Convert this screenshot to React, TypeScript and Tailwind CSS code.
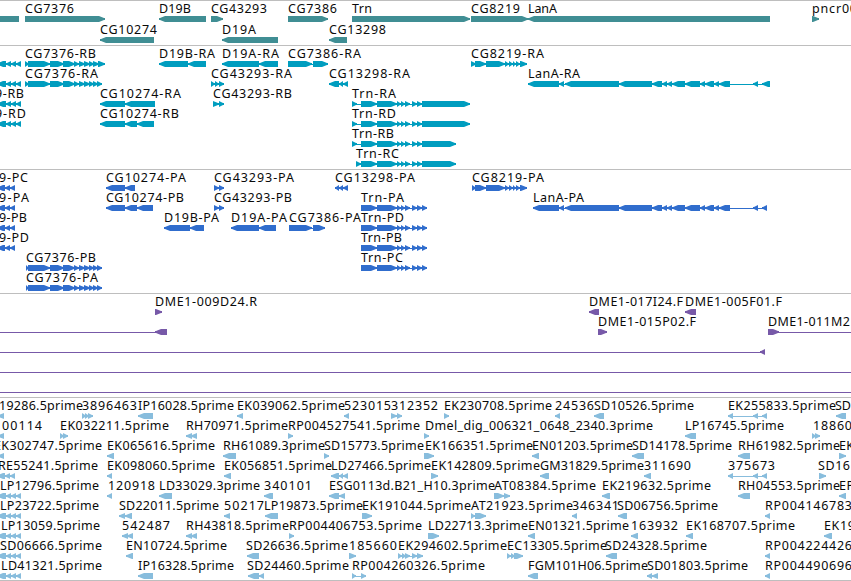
type Block = [number, number];
type Label = [text: string, start: number, end: number];
type Feature = { dir: "L" | "R" | "-"; blocks: Block[] };
type Row = { labels?: Label[]; features: Feature[] };

const L = (...blocks: Block[]): Feature => ({ dir: "L", blocks });
const R = (...blocks: Block[]): Feature => ({ dir: "R", blocks });
const line = (start: number, end: number): Feature => ({ dir: "-", blocks: [[start, end]] });

// exon runs shared by several transcripts
const cg7376: Block[] = [[28, 50], [50, 64], [63, 75], [74, 79], [79, 85], [84, 90], [89, 94]];
const trn: Block[] = [[361, 377], [377, 397], [397, 401], [401, 405], [405, 410], [412, 417]];
const cg8219: Block[] = [[475, 486], [486, 505], [505, 509], [509, 513], [513, 516], [516, 520], [520, 527]];
const lanA: Block[] = [
  [565, 619], [619, 652], [652, 662], [662, 667], [667, 672], [672, 685], [685, 700],
  [700, 705], [705, 714], [714, 719], [719, 730], [753, 758],
];
const edge21: Feature = L([-3, 6], [6, 11], [11, 16], [16, 21]);
const edge15: Feature = L([-3, 5], [5, 10], [10, 15]);

const genes: Row[] = [
  {
    labels: [
      ["CG7376", 25, 74], ["D19B", 159, 191], ["CG43293", 211, 267], ["CG7386", 288, 337],
      ["Trn", 352, 372], ["CG8219", 471, 520], ["LanA", 528, 557], ["pncr00", 812, 857],
    ],
    features: [
      L([-20, 19]), R([25, 105]), L([159, 206]), R([211, 223]), R([288, 328]),
      R([352, 470]), R([471, 528]), L([528, 770]), R([812, 819]),
    ],
  },
  {
    labels: [["CG10274", 100, 157], ["D19A", 222, 256], ["CG13298", 329, 386]],
    features: [L([100, 154]), L([222, 278]), L([329, 347])],
  },
];

const transcripts: Row[] = [
  {
    labels: [
      ["CG7376-RB", 25, 96], ["D19B-RA", 159, 215], ["D19A-RA", 222, 279],
      ["CG7386-RA", 288, 361], ["CG8219-RA", 471, 544],
    ],
    features: [
      edge21, R([25, 29], ...cg7376, [93, 99], [98, 105]), L([159, 188], [188, 206]),
      L([222, 259], [259, 278]), R([288, 312], [313, 328]), R([471, 476], ...cg8219),
    ],
  },
  {
    labels: [
      ["CG7376-RA", 25, 98], ["CG43293-RA", 211, 292], ["CG13298-RA", 329, 410], ["LanA-RA", 528, 580],
    ],
    features: [
      edge21, R([25, 29], ...cg7376, [93, 98], [97, 102]), R([211, 215], [215, 219], [219, 224]),
      L([329, 339], [339, 343], [343, 348]), L([528, 559], [559, 564], ...lanA, [762, 770]),
    ],
  },
  {
    labels: [["9-RB", -5, 24], ["CG10274-RA", 100, 181], ["CG43293-RB", 213, 292], ["Trn-RA", 352, 396]],
    features: [
      edge21, L([100, 125], [125, 155]), R([213, 219], [219, 224]),
      R([352, 357], ...trn, [417, 422], [422, 470]),
    ],
  },
  {
    labels: [["9-RD", -5, 26], ["CG10274-RB", 100, 179], ["Trn-RD", 352, 396]],
    features: [
      edge21, L([100, 125], [125, 137], [137, 154]), R([352, 357], ...trn, [417, 422], [422, 470]),
    ],
  },
  {
    labels: [["Trn-RB", 352, 394]],
    features: [R([352, 357], ...trn, [417, 422], [422, 456])],
  },
  {
    labels: [["Trn-RC", 356, 399]],
    features: [R([356, 361], ...trn, [417, 422], [422, 456])],
  },
];

const proteins: Row[] = [
  {
    labels: [
      ["9-PC", -1, 28], ["CG10274-PA", 106, 186], ["CG43293-PA", 214, 294],
      ["CG13298-PA", 335, 415], ["CG8219-PA", 472, 544],
    ],
    features: [
      edge15, L([106, 125], [125, 135]), R([214, 219], [219, 224]),
      L([335, 339], [339, 343], [343, 348]), R([472, 476], ...cg8219),
    ],
  },
  {
    labels: [
      ["9-PA", -1, 29], ["CG10274-PB", 106, 184], ["CG43293-PB", 214, 292],
      ["Trn-PA", 361, 404], ["LanA-PA", 533, 584],
    ],
    features: [
      edge15, L([106, 125], [125, 137], [137, 153]), R([214, 219], [219, 224]),
      R(...trn, [417, 422], [422, 427]), L([533, 559], [559, 564], ...lanA, [762, 767]),
    ],
  },
  {
    labels: [
      ["9-PB", -1, 27], ["D19B-PA", 164, 219], ["D19A-PA", 231, 287],
      ["CG7386-PA", 289, 361], ["Trn-PD", 361, 404],
    ],
    features: [
      edge15, L([164, 190], [190, 204]), L([231, 259], [259, 276]),
      R([289, 312], [313, 325]), R(...trn, [417, 422], [422, 427]),
    ],
  },
  {
    labels: [["9-PD", -1, 29], ["Trn-PB", 361, 402]],
    features: [edge15, R(...trn, [417, 422], [422, 427])],
  },
  {
    labels: [["CG7376-PB", 26, 96], ["Trn-PC", 361, 403]],
    features: [R([26, 29], ...cg7376, [93, 98], [97, 102]), R(...trn, [417, 422], [422, 427])],
  },
  {
    labels: [["CG7376-PA", 26, 98]],
    features: [R([26, 29], ...cg7376, [93, 98], [97, 102])],
  },
];

const bacs: Row[] = [
  {
    labels: [["DME1-009D24.R", 155, 257], ["DME1-017I24.F", 589, 683], ["DME1-005F01.F", 685, 782]],
    features: [R([155, 162]), L([589, 599]), L([685, 696])],
  },
  {
    labels: [["DME1-015P02.F", 598, 696], ["DME1-011M2", 768, 850]],
    features: [line(0, 157), L([155, 167]), R([598, 607]), R([768, 779]), line(775, 851)],
  },
  { features: [line(0, 762), L([760, 765])] },
  { features: [line(0, 851)] },
  { features: [line(0, 851)] },
];

const ests: Row[] = [
  {
    labels: [
      ["19286.5prime", -1, 83], ["3896463", 82, 137], ["IP16028.5prime", 138, 234],
      ["EK039062.5prime", 237, 345], ["523015", 344, 391], ["312352", 391, 438],
      ["EK230708.5prime", 444, 552], ["24536", 555, 594], ["SD10526.5prime", 594, 694],
      ["EK255833.5prime", 728, 836], ["SD", 835, 851],
    ],
    features: [
      L([-2, 4]), R([82, 86], [85, 89], [88, 93]), L([138, 153]), L([237, 243]), L([344, 349]),
      R([391, 397], [397, 402]), R([444, 449]), L([555, 560]), L([594, 604]),
      L([728, 733], [753, 758], [762, 767]), L([836, 846]),
    ],
  },
  {
    labels: [
      ["00114", 2, 42], ["EK032211.5prime", 60, 169], ["RH70971.5prime", 186, 288],
      ["RP004527541.5prime", 288, 420], ["Dmel_dig_006321_0648_2340.3prime", 425, 653],
      ["LP16745.5prime", 685, 784], ["18860", 813, 852],
    ],
    features: [
      L([-2, 4]), R([60, 64], [63, 68]), L([186, 192], [191, 197]), R([288, 293]), R([424, 429]),
      L([685, 696]), R([812, 816], [815, 820]),
    ],
  },
  {
    labels: [
      ["EK302747.5prime", -6, 102], ["EK065616.5prime", 107, 215], ["RH61089.3prime", 223, 325],
      ["SD15773.5prime", 324, 424], ["EK166351.5prime", 425, 533], ["EN01203.5prime", 532, 633],
      ["SD14178.5prime", 632, 732], ["RH61982.5prime", 738, 840], ["EK", 839, 854],
    ],
    features: [
      L([-2, 4]), L([107, 114]), L([223, 236]), R([324, 329]), R([424, 434]), L([532, 539]),
      L([632, 644]), L([738, 750]), R([839, 846]),
    ],
  },
  {
    labels: [
      ["RE55241.5prime", -2, 98], ["EK098060.5prime", 107, 215], ["EK056851.5prime", 224, 332],
      ["LD27466.5prime", 331, 431], ["EK142809.5prime", 431, 540], ["GM31829.5prime", 540, 644],
      ["311690", 644, 691], ["375673", 728, 775], ["SD16", 818, 850],
    ],
    features: [
      edge15, L([107, 112]), L([224, 231]), L([331, 339], [339, 343], [343, 348]), R([431, 438]),
      L([540, 549]), L([644, 651]), L([728, 733], [753, 758], [762, 767]), R([819, 826]),
    ],
  },
  {
    labels: [
      ["LP12796.5prime", 0, 99], ["120918", 108, 155], ["LD33029.3prime", 159, 260],
      ["340101", 264, 312], ["ESG0113d.B21_H10.3prime", 329, 495], ["AT08384.5prime", 494, 596],
      ["EK219632.5prime", 602, 711], ["RH04553.5prime", 738, 840], ["EP", 839, 854],
    ],
    features: [
      edge21, L([107, 112]), L([159, 172]), L([264, 273]), L([329, 339], [339, 345]),
      R([494, 504], [504, 510]), L([602, 610]), L([738, 750]), L([839, 846]),
    ],
  },
  {
    labels: [
      ["LP23722.5prime", 0, 99], ["SD22011.5prime", 119, 219], ["50217", 224, 264],
      ["LP19873.5prime", 264, 363], ["EK191044.5prime", 362, 471], ["AT21923.5prime", 471, 573],
      ["346341", 572, 619], ["SD06756.5prime", 617, 718], ["RP004146783", 765, 852],
    ],
    features: [
      edge21, L([119, 125], [125, 132]), L([224, 230]), L([265, 278]), R([362, 372]),
      R([471, 475], [475, 486]), L([572, 577]), L([618, 627]), L([765, 770]),
    ],
  },
  {
    labels: [
      ["LP13059.5prime", 1, 100], ["542487", 122, 170], ["RH43818.5prime", 186, 289],
      ["RP004406753.5prime", 289, 422], ["LD22713.3prime", 428, 528], ["EN01321.5prime", 528, 629],
      ["163932", 631, 678], ["EK168707.5prime", 686, 795], ["EK19", 824, 855],
    ],
    features: [
      edge21, L([122, 128], [127, 133]), L([186, 192], [191, 197]), R([289, 294]), R([428, 439]),
      L([528, 535]), L([631, 638]), L([686, 693]), L([824, 832]),
    ],
  },
  {
    labels: [
      ["SD06666.5prime", 0, 102], ["EN10724.5prime", 126, 227], ["SD26636.5prime", 246, 348],
      ["185660", 349, 397], ["EK294602.5prime", 398, 507], ["EC13305.5prime", 507, 607],
      ["SD24328.5prime", 605, 707], ["RP004224426", 765, 852],
    ],
    features: [
      edge21, L([126, 133]), L([247, 259]), R([349, 356]),
      R([398, 402], [402, 406], [405, 410], [412, 417], [417, 423]),
      R([507, 511], [511, 515], [514, 523]), L([606, 617]), L([765, 770]),
    ],
  },
  {
    labels: [
      ["LD41321.5prime", 1, 102], ["IP16328.5prime", 138, 234], ["SD24460.5prime", 247, 349],
      ["RP004260326.5prime", 352, 485], ["FGM101H06.5prime", 528, 648], ["SD01803.5prime", 647, 748],
      ["RP004490696", 765, 852],
    ],
    features: [
      edge21, L([138, 153]), L([248, 259], [259, 264]), R([352, 356], [361, 366]), L([528, 538]),
      L([647, 652], [652, 658]), L([765, 770]),
    ],
  },
];

function arrow(dir: Feature["dir"], [a, b]: Block) {
  const head = Math.min(6, b - a);
  if (dir === "R") return `M${a} 15H${b - head}L${b - 1} 17H${b}V19H${b - 1}L${b - head} 21H${a}Z`;
  return `M${b} 15H${a + head}L${a + 1} 17H${a}V19H${a + 1}L${a + head} 21H${b}Z`;
}

function TrackRow({ row }: { row: Row }) {
  return (
    <svg width="851" height="24" className="block shrink-0 overflow-visible">
      {row.features.map((f, i) => {
        const start = f.blocks[0][0];
        const end = f.blocks[f.blocks.length - 1][1];
        return (
          <g key={i} fill="currentColor">
            <rect x={start} y="18" width={end - start} height="1" />
            {f.dir !== "-" && <path d={f.blocks.map((b) => arrow(f.dir, b)).join("")} />}
          </g>
        );
      })}
      {row.labels?.map(([text, start, end]) => (
        <text key={text} x={start} y="12" textLength={end - start} fill="#0a0a0a">
          {text}
        </text>
      ))}
    </svg>
  );
}

function Track({ rows, className }: { rows: Row[]; className: string }) {
  return (
    <section className={`flex shrink-0 flex-col border-t border-[#bebebe] ${className}`}>
      {rows.map((row, i) => (
        <TrackRow key={i} row={row} />
      ))}
    </section>
  );
}

export default function App() {
  return (
    <main className="flex h-[581px] w-[851px] flex-col overflow-hidden border-b border-[#bebebe] bg-white font-['Noto_Sans',sans-serif] text-[12.5px]">
      <Track rows={genes} className="h-[45px] -space-y-[3px] text-[#408e94]" />
      <Track rows={transcripts} className="h-[124px] -space-y-1 text-[#009dbf]" />
      <Track rows={proteins} className="h-[124px] -space-y-1 text-[#306dcd]" />
      <Track rows={bacs} className="h-[104px] -space-y-1 text-[#7759a8]" />
      <Track rows={ests} className="h-[183px] -space-y-1 text-[#88bddd]" />
    </main>
  );
}
